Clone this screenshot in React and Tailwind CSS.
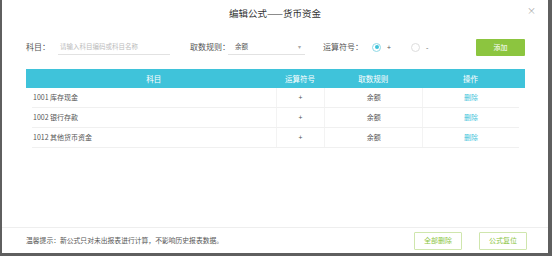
const rows = [
  { name: "1001 库存现金", op: "+", rule: "余额" },
  { name: "1002 银行存款", op: "+", rule: "余额" },
  { name: "1012 其他货币资金", op: "+", rule: "余额" },
];

export default function App() {
  return (
    <div
      className="w-[552px] h-[256px] bg-[#5f5f5f] pl-[2px] pr-[4px] pb-[3px] overflow-hidden"
      style={{ fontFamily: '"Noto Sans CJK SC", "Noto Sans", sans-serif' }}
    >
      <div className="relative h-full bg-white flex flex-col">
        {/* title */}
        <div className="h-[26px] flex items-center justify-center text-[9.5px] text-[#333]">
          编辑公式——货币资金
        </div>
        <span className="absolute right-[12px] top-[6px] text-[9px] leading-none text-[#aaa]">×</span>

        {/* form */}
        <div className="flex items-center h-[18px] mt-[12px] pl-[24px] text-[8px] text-[#555] whitespace-nowrap">
          <span className="w-[32px] shrink-0">科目：</span>
          <div className="w-[112px] shrink-0 h-[16px] flex items-center border-b border-[#e2e2e2] pl-[2px] text-[6.5px] text-[#bbb]">
            请输入科目编码或科目名称
          </div>
          <span className="ml-[20px] w-[38px] shrink-0">取数规则：</span>
          <div className="w-[77px] shrink-0 h-[16px] flex items-center justify-between border-b border-[#e2e2e2] pl-[7px] pr-[4px] text-[6.5px] text-[#555]">
            <span>余额</span>
            <span className="text-[6px] text-[#aaa]">▾</span>
          </div>
          <span className="ml-[18px] w-[49px] shrink-0">运算符号：</span>
          <span className="w-[9px] h-[9px] shrink-0 rounded-full border border-[#8fd9e6] flex items-center justify-center">
            <span className="w-[4px] h-[4px] rounded-full bg-[#3ec3da]" />
          </span>
          <span className="ml-[6px] w-[24px] shrink-0 text-[7px]">+</span>
          <span className="w-[9px] h-[9px] shrink-0 rounded-full border border-[#ddd]" />
          <span className="ml-[6px] w-[50px] shrink-0 text-[7px]">-</span>
          <button className="w-[49px] h-[17px] shrink-0 bg-[#8cc53f] text-white text-[7px] rounded-[1px]">添加</button>
        </div>

        {/* table */}
        <div className="mt-[13px] ml-[24px] w-[499px] text-[7px] text-[#555]">
          <div className="h-[19px] bg-[#3fc3da] text-white text-[7.5px] flex items-center px-[6px]">
            <div className="w-[244px] text-center">科目</div>
            <div className="w-[49px] text-center">运算符号</div>
            <div className="w-[98px] text-center">取数规则</div>
            <div className="w-[97px] text-center">操作</div>
          </div>
          <div className="mx-[6px]">
            {rows.map((r) => (
              <div key={r.name} className="h-[20px] flex border-b border-[#f0f0f0]">
                <div className="w-[244px] flex items-center pl-[1px]">{r.name}</div>
                <div className="w-[49px] flex items-center justify-center border-l border-[#f3f3f3]">{r.op}</div>
                <div className="w-[98px] flex items-center justify-center border-l border-[#f3f3f3]">{r.rule}</div>
                <div className="w-[97px] flex items-center justify-center border-l border-[#f3f3f3] text-[#3fc3da]">删除</div>
              </div>
            ))}
          </div>
        </div>

        {/* footer */}
        <div className="mt-auto h-[26px] border-t border-[#eee] flex items-center pl-[24px] pr-[21px] text-[6.8px] text-[#555]">
          <span className="flex-1">温馨提示：新公式只对未出报表进行计算，不影响历史报表数据。</span>
          <button className="w-[48px] h-[18px] border border-[#cfe6ad] text-[#8cc53f] text-[7px] rounded-[1px]">全部删除</button>
          <button className="ml-[17px] w-[48px] h-[18px] border border-[#cfe6ad] text-[#8cc53f] text-[7px] rounded-[1px]">公式复位</button>
        </div>
      </div>
    </div>
  );
}
